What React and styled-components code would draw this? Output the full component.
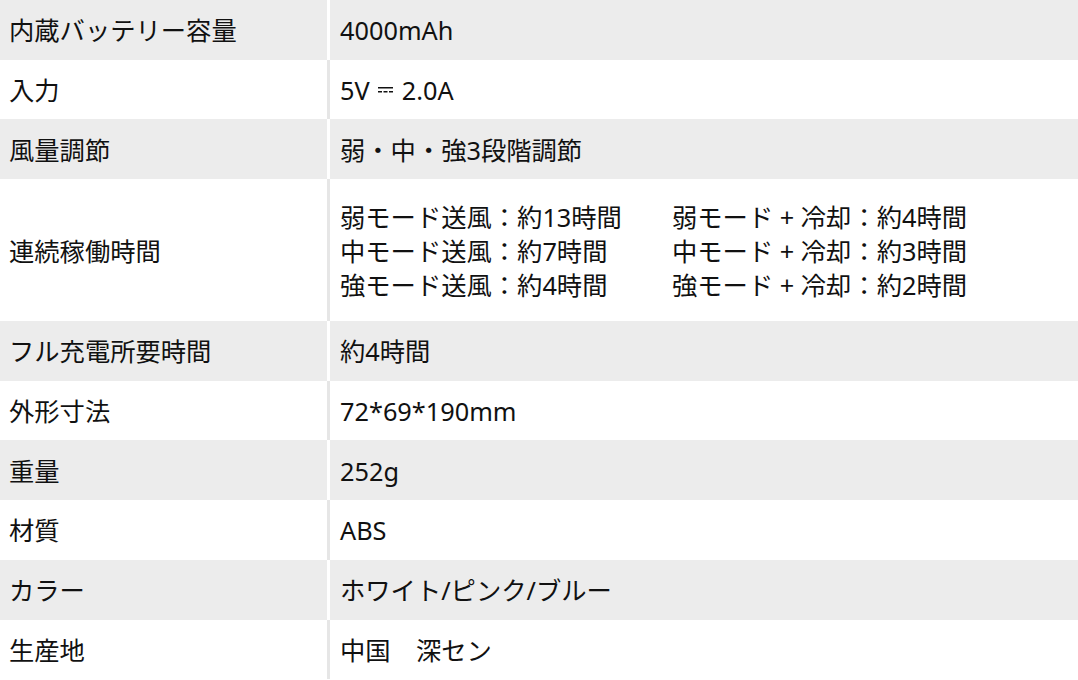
import React from 'react'
import styled, { createGlobalStyle } from 'styled-components'

const GlobalStyle = createGlobalStyle`
    html, body {
        margin: 0;
        padding: 0;
        background: #ffffff;
    }

    body {
        font-family: "Noto Sans", "Noto Sans CJK JP", sans-serif;
        color: #111111;
    }
`

const SpecTable = styled.div`
    display: flex;
    flex-direction: column;
    width: 1078px;
`

const Row = styled.div`
    display: grid;
    grid-template-columns: 327px 1fr;
    min-height: ${props => props.$tall ? '142px' : '59.7px'};
    background: ${props => props.$shade ? '#ececec' : '#ffffff'};
`

const Label = styled.div`
    display: flex;
    align-items: center;
    padding: 1px 0 0 9px;
    font-size: 25.3px;
    line-height: 34px;
`

const Value = styled.div`
    display: flex;
    align-items: center;
    border-left: 3px solid ${props => props.$shade ? '#ffffff' : '#e6e6e6'};
    padding: 1px 0 0 10px;
    font-size: 25.3px;
    line-height: 34px;
`

const TimeGrid = styled.div`
    display: grid;
    grid-template-columns: 332px auto;
`

const DcSign = () => (
    <svg width="15" height="8" viewBox="0 0 15 8" style={{ margin: '0 9px 0 8px', verticalAlign: 'middle' }}>
        <rect x="0" y="1" width="15" height="1.5" fill="#111" />
        <rect x="0" y="5" width="4" height="1.5" fill="#111" />
        <rect x="5.5" y="5" width="4" height="1.5" fill="#111" />
        <rect x="11" y="5" width="4" height="1.5" fill="#111" />
    </svg>
)

const specs = [
    { label: '内蔵バッテリー容量', value: '4000mAh' },
    { label: '入力', value: <>5V<DcSign />2.0A</> },
    { label: '風量調節', value: '弱・中・強3段階調節' },
    {
        label: '連続稼働時間',
        tall: true,
        value: (
            <TimeGrid>
                <span>弱モード送風：約13時間</span>
                <span>弱モード + 冷却：約4時間</span>
                <span>中モード送風：約7時間</span>
                <span>中モード + 冷却：約3時間</span>
                <span>強モード送風：約4時間</span>
                <span>強モード + 冷却：約2時間</span>
            </TimeGrid>
        )
    },
    { label: 'フル充電所要時間', value: '約4時間' },
    { label: '外形寸法', value: '72*69*190mm' },
    { label: '重量', value: '252g' },
    { label: '材質', value: 'ABS' },
    { label: 'カラー', value: 'ホワイト/ピンク/ブルー' },
    { label: '生産地', value: '中国　深セン' },
]

const App = () => {
    return (
        <>
            <GlobalStyle />
            <SpecTable>
                {specs.map((spec, i) => (
                    <Row key={spec.label} $shade={i % 2 === 0} $tall={spec.tall}>
                        <Label>{spec.label}</Label>
                        <Value $shade={i % 2 === 0}>{spec.value}</Value>
                    </Row>
                ))}
            </SpecTable>
        </>
    )
}

export default App
